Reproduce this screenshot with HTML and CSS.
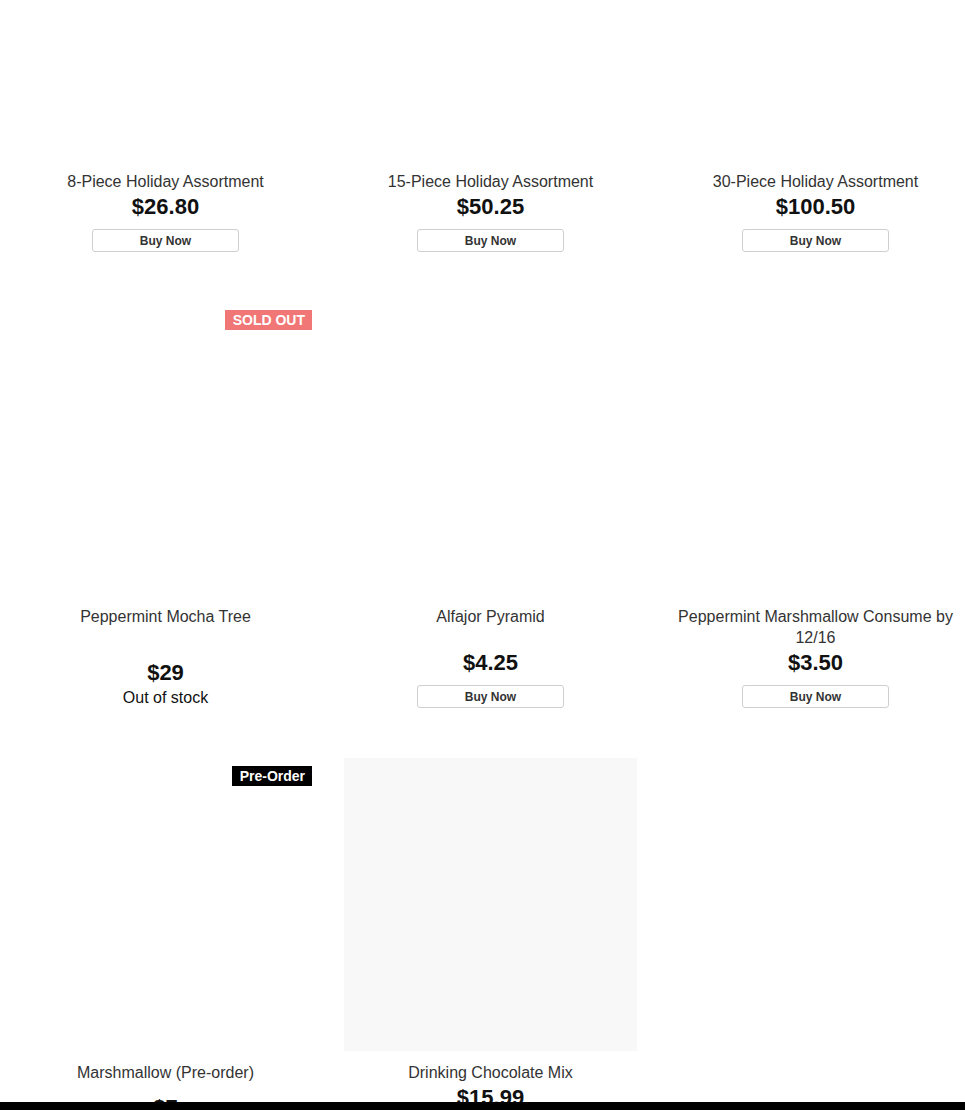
FILE: index.html
```html
<!DOCTYPE html>
<html lang="en">
<head>
<meta charset="utf-8">
<title>Holiday Collection</title>
<link rel="stylesheet" href="styles.css">
</head>
<body>
<main class="grid">
  <article class="card">
    <div class="thumb"></div>
    <h3 class="title">8-Piece Holiday Assortment</h3>
    <div class="price">$26.80</div>
    <button class="buy">Buy Now</button>
  </article>
  <article class="card">
    <div class="thumb"></div>
    <h3 class="title">15-Piece Holiday Assortment</h3>
    <div class="price">$50.25</div>
    <button class="buy">Buy Now</button>
  </article>
  <article class="card">
    <div class="thumb"></div>
    <h3 class="title">30-Piece Holiday Assortment</h3>
    <div class="price">$100.50</div>
    <button class="buy">Buy Now</button>
  </article>

  <article class="card">
    <div class="thumb"><span class="badge badge--sold">SOLD OUT</span></div>
    <h3 class="title">Peppermint Mocha Tree</h3>
    <div class="price">$29</div>
    <div class="stock">Out of stock</div>
  </article>
  <article class="card">
    <div class="thumb"></div>
    <h3 class="title">Alfajor Pyramid</h3>
    <div class="price">$4.25</div>
    <button class="buy">Buy Now</button>
  </article>
  <article class="card">
    <div class="thumb"></div>
    <h3 class="title">Peppermint Marshmallow Consume by 12/16</h3>
    <div class="price">$3.50</div>
    <button class="buy">Buy Now</button>
  </article>

  <article class="card">
    <div class="thumb"><span class="badge badge--pre">Pre-Order</span></div>
    <h3 class="title">Marshmallow (Pre-order)</h3>
    <div class="price">$7</div>
    <div class="stock">Pre-order</div>
  </article>
  <article class="card">
    <div class="thumb thumb--placeholder"></div>
    <h3 class="title">Drinking Chocolate Mix</h3>
    <div class="price">$15.99</div>
    <button class="buy">Buy Now</button>
  </article>
</main>
<div class="bottom-bar"></div>
</body>
</html>
```
FILE: styles.css
```css
html, body {
  margin: 0;
  padding: 0;
  background: #fff;
}

body {
  font-family: "Liberation Sans", Arial, sans-serif;
  color: #333;
}

.grid {
  display: grid;
  grid-template-columns: repeat(3, 293px);
  column-gap: 32px;
  row-gap: 50px;
  padding: 0 0 60px 19px;
  margin-top: -133px;
  align-items: stretch;
}

.card {
  display: flex;
  flex-direction: column;
  align-items: center;
  text-align: center;
}

.thumb {
  position: relative;
  width: 293px;
  height: 293px;
}

.thumb--placeholder {
  background: #f8f8f8;
}

.badge {
  position: absolute;
  top: 8px;
  right: 0;
  height: 20px;
  line-height: 20px;
  padding: 0 7px 0 8px;
  font-size: 14px;
  font-weight: bold;
  color: #fff;
}

.badge--sold {
  background: #f17777;
}

.badge--pre {
  background: #000;
}

.title {
  flex: 1;
  margin: 11px 0 0;
  font-size: 16px;
  font-weight: normal;
  line-height: 21px;
  color: #333;
}

.price {
  font-size: 22px;
  font-weight: bold;
  line-height: 29px;
  color: #111;
}

.stock {
  font-size: 16px;
  line-height: 21px;
  color: #111;
}

.buy {
  margin-top: 8px;
  width: 147px;
  height: 23px;
  padding: 0;
  border: 1px solid #cfcfcf;
  border-radius: 3px;
  background: #fff;
  font-family: "Liberation Sans", Arial, sans-serif;
  font-size: 12px;
  font-weight: bold;
  color: #333;
}

.bottom-bar {
  position: fixed;
  left: 0;
  right: 0;
  bottom: 0;
  height: 8px;
  background: #000;
}
```
